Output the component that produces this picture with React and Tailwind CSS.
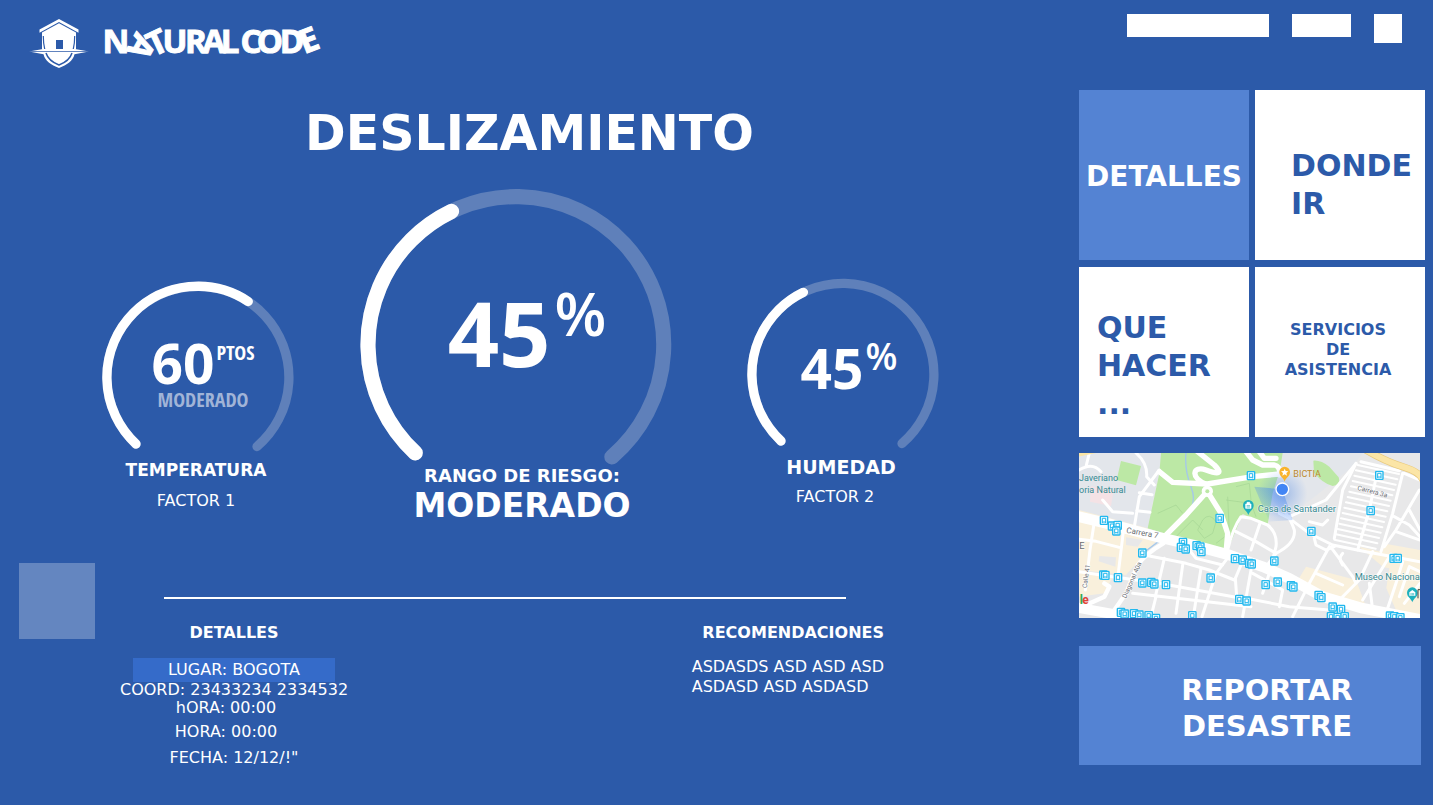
const BRAND_GLYPHS = [
  ["N", 116, 53, 0],
  ["A", 131, 41, 119],
  ["T", 162, 53, -25],
  ["U", 175, 53, 0],
  ["R", 196, 53, 0],
  ["A", 214, 53, 0],
  ["L", 230, 53, 0],
  ["C", 251, 53, 0],
  ["O", 270, 53, 0],
  ["D", 292, 53, 0],
  ["E", 313, 51, -21],
];

function Logo() {
  return (
    <svg viewBox="0 0 60 50" className="h-[50px] w-[60px]" fill="#fff" aria-hidden="true">
      <path d="M30 1 49.500 11.500V14.800L30 4 10.500 14.800V11.500Z" />
      <path d="M30 5.200 47 14.600V31.500H13V14.600Z" />
      <path d="M27 22H34V31.500H27Z" fill="#2c5aa9" />
      <path d="M14.300 18Q14.300 26 15.800 31.500M45.700 18Q45.700 26 44.200 31.500" fill="none" stroke="#2c5aa9" strokeWidth="1.200" />
      <path d="M0 33.500 14 31H46L60 33.500 45.500 36.300C44 43 38 47 30 50 22 47 16 43 14.500 36.300Z" />
      <path d="M0 33.200H60V34H0Z" fill="#2c5aa9" />
      <path d="M17 35C19 41.500 23.500 44.500 30 47 36.500 44.500 41 41.500 43 35" fill="none" stroke="#2c5aa9" strokeWidth="1.500" />
    </svg>
  );
}

function Brand() {
  return (
    <svg viewBox="100 18 240 50" className="h-[50px] w-[240px]" role="img" aria-label="Natural Code">
      <g
        className="font-['Open_Sans',sans-serif] text-[33px] font-bold"
        fill="#fff"
        stroke="#fff"
        strokeWidth="1"
        textAnchor="middle"
      >
        {BRAND_GLYPHS.map(([letter, x, y, angle]) => (
          <text key={letter + x} x={x} y={y} transform={`rotate(${angle} ${x} ${y})`}>
            {letter}
          </text>
        ))}
      </g>
    </svg>
  );
}

const RING_PATH = "M34 163A91 91 0 1 1 155 165.500";

function Ring({ share, children }) {
  return (
    <div className="relative">
      <svg viewBox="0 0 192 171" className="block w-full" fill="none" strokeWidth="9.300" strokeLinecap="round" aria-hidden="true">
        <path d={RING_PATH} stroke="#5f80ba" />
        <path d={RING_PATH} stroke="#fff" pathLength="100" strokeDasharray={`${share} 200`} />
      </svg>
      <div className="absolute inset-0 font-['Open_Sans',sans-serif] leading-none">{children}</div>
    </div>
  );
}

const BUSES = [
  [84, 211], [108, 228], [125, 226], [121, 243], [199, 309], [82, 375], [88, 376], [126, 383], [199, 399],
  [226, 397], [235, 402], [270, 404], [404, 384], [431, 205], [321, 277], [315, 292], [329, 297], [362, 287],
  [373, 291], [376, 305], [477, 326], [500, 330], [520, 340], [527, 342], [490, 448], [512, 453], [135, 487],
  [146, 492], [174, 491], [190, 495], [218, 497], [240, 505], [349, 497], [525, 77], [910, 76], [884, 182],
  [706, 244], [953, 325], [965, 325], [595, 333], [569, 404], [605, 396], [645, 407], [652, 411], [728, 436],
  [736, 443], [770, 471], [795, 478], [765, 500], [785, 502], [806, 500], [942, 498], [955, 500], [973, 503],
];

const STREETS = [
  "M9 268 60 274 130 292M55 215 42 300 28 420M142 245 125 385M9 365 110 380 250 400 480 442",
  "M190 312 330 340 400 360 475 390M265 325 238 440M320 345 300 490M375 355 352 500M458 320 420 370 378 500",
  "M340 300 360 325 440 345M495 345 478 385 482 440M170 430 525 470M240 440 225 500M525 360 500 500",
  "M9 60Q50 35 75 65M40 9 30 50M180 9Q215 40 212 80L235 105M250 60 190 140 175 230M190 128 228 134M182 182 222 187M80 150 110 185 170 190",
  "M455 300Q470 235 495 200L525 205 575 225Q605 250 600 290L580 370 560 430M480 245 540 275 600 310Q660 280 655 240 645 210 630 190",
  "M552 220 525 300M600 310 570 350M610 190 640 205 700 250 770 285 870 305 1032 335M640 200 750 150 840 40",
  "M715 265 720 285 750 300 775 290M700 215 740 225 755 210M760 290 700 400 650 500M765 292 830 380 840 400M890 305 850 390 780 460 760 470",
  "M945 312 900 385 860 450M720 370 800 405M800 310Q785 325 800 345M980 335 960 400 930 490M1032 365 1000 350 970 440M1032 400 985 460",
  "M840 40 800 120 775 265M855 35 970 62M980 70 950 190 915 305M905 60 880 180 845 300M1030 120 960 240 925 290M955 200 1000 225 1032 260M960 245 1032 270M985 70 1032 90M1000 180 1032 240",
  "M510 445 640 470 760 480M530 370 620 420 610 470M880 400 890 480",
];

const BLOCK_ROWS = Array.from({ length: 15 }, (_, i) => {
  const y = 45 + i * 16;
  const x = 845 - i * 5;
  return `M${x} ${y}L${x + 124} ${y + 27}`;
}).join("");

function Pin({ x, y, color }) {
  return (
    <path
      transform={`translate(${x} ${y})`}
      d="M0 27C-3 15-16 12-16-2A16 16 0 0 1 16-2C16 12 3 15 0 27Z"
      fill={color}
    />
  );
}

function CityMap() {
  return (
    <svg
      viewBox="9 9 1023 495"
      preserveAspectRatio="xMidYMid slice"
      className="mt-4 block h-[165px] w-[341px] font-[Roboto,sans-serif]"
      role="img"
      aria-label="Mapa"
    >
      <defs>
        <linearGradient id="beam" x1="1" y1="0" x2="0.200" y2="1">
          <stop offset="0" stopColor="#4285f4" stopOpacity="0.600" />
          <stop offset="1" stopColor="#4285f4" stopOpacity="0" />
        </linearGradient>
        <radialGradient id="halo">
          <stop offset="0.200" stopColor="#3f7de0" stopOpacity="0.750" />
          <stop offset="1" stopColor="#4285f4" stopOpacity="0" />
        </radialGradient>
      </defs>
      <path d="M9 9H1032V504H9Z" fill="#e8e8e9" />
      <path d="M9 9H260L215 235 9 190ZM600 9H860L830 50 640 200 590 150Z" fill="#e3e6eb" />
      <path d="M9 180 215 235 250 262 190 330 150 375 9 360ZM9 360 110 380 85 430 9 440Z" fill="#f9f0dc" />
      <path d="M850 290 945 312 920 350ZM690 350 840 390 870 470 730 435 660 400ZM920 280 1032 300V500L960 480 920 390Z" fill="#f9f0dc" />
      <path d="M70 318 120 322 118 350 68 334ZM150 262 200 270 185 290 150 285ZM890 345 940 355 930 420 880 400Z" fill="#e8e8e9" />
      <path d="M45 108 112 125 105 168 42 155Z" fill="#f4e2e5" />
      <path d="M255 9H620L612 60 590 130 575 225 500 192 455 300 440 305 215 235 250 70Z" fill="#bce8a5" />
      <path d="M135 33 195 48 180 106 122 90ZM712 32Q735 30 760 50L788 82Q795 105 770 108 740 100 714 68Z" fill="#bce8a5" />
      <path d="M330 9Q325 60 345 110T330 200Q290 225 265 262L200 310" fill="none" stroke="#a5c8ea" strokeWidth="4" />
      <path
        d="M245 190 300 165 320 190M380 210Q400 185 420 215L410 250 385 265 365 240ZM450 150 525 160 540 200M455 140 460 250 420 280M480 110 520 100 525 150M300 260 350 210 380 240"
        fill="none"
        stroke="#a5d594"
        strokeWidth="2"
      />
      <g fill="none" stroke="#fff" strokeLinejoin="round" strokeLinecap="round">
        {STREETS.map((d) => (
          <path key={d} d={d} strokeWidth="9" />
        ))}
        <path d={BLOCK_ROWS} strokeWidth="6" />
        <path d="M262 280Q210 310 185 345L150 430 105 495M85 400 100 410 85 440 30 465" strokeWidth="13" />
        <path d="M265 260 330 195 394 124M394 124 435 190 455 250 450 310M250 65 290 97 394 102 530 80 610 72" strokeWidth="16" />
        <path d="M394 104C340 85 350 45 390 60S440 70 415 45L365 5M510 5 530 30 560 45 595 45Q615 50 610 75M550 5 565 25 600 25" strokeWidth="16" />
        <circle cx="394" cy="124" r="12" strokeWidth="10" />
        <path d="M0 198 100 222 250 262 350 285 460 315 560 350 640 385 740 440 860 475 1040 510" strokeWidth="32" />
        <path d="M0 472 110 492 200 515" strokeWidth="30" />
        <path d="M870 0Q930 35 980 50T1040 88" stroke="#e9c97b" strokeWidth="22" />
        <path d="M870 0Q930 35 980 50T1040 88" stroke="#fbe5a6" strokeWidth="18" />
        <path d="M0 14 55 3" stroke="#fbe5a6" strokeWidth="14" />
      </g>
      <circle cx="394" cy="124" r="6" fill="#bce8a5" />
      <circle cx="619" cy="130" r="75" fill="url(#halo)" opacity="0.450" />
      <path d="M619 118 535 110 580 215 650 210Z" fill="url(#beam)" />

      {BUSES.map(([x, y]) => (
        <g key={`${x}-${y}`} transform={`translate(${x} ${y})`}>
          <rect x="-11" y="-12" width="22" height="24" rx="2" fill="#e9f8fe" stroke="#22b8ee" strokeWidth="4" />
          <path d="M-5-6H5V5H-5ZM-5 5V8M5 5V8" fill="#fff" stroke="#22b8ee" strokeWidth="3" />
        </g>
      ))}

      <g fill="#368a92" fontSize="27">
        <text x="9" y="93">Javeriano</text>
        <text x="9" y="129">oria Natural</text>
        <g stroke="#fff" strokeWidth="4" strokeOpacity="0.600" paintOrder="stroke">
          <text x="545" y="187" fontSize="28">Casa de Santander</text>
          <text x="836" y="391" fontSize="28">Museo Naciona</text>
        </g>
        <text x="652" y="81" fill="#bd8a2d">BICTIA</text>
      </g>
      <g fill="#696d72" stroke="#fff" strokeWidth="4" strokeOpacity="0.700" paintOrder="stroke">
        <text x="150" y="248" fontSize="24" transform="rotate(10 150 248)">Carrera 7</text>
        <text x="843" y="119" fontSize="20" transform="rotate(15 843 119)">Carrera 3a</text>
        <text x="32" y="415" fontSize="20" transform="rotate(-82 32 415)">Calle 41</text>
        <text x="150" y="446" fontSize="20" transform="rotate(-66 150 446)">Diagonal 40a</text>
        <text x="10" y="298" fontSize="28">E</text>
      </g>
      <g fontSize="36" fontWeight="700">
        <text x="11" y="462" fill="#34a853">l</text>
        <text x="19" y="462" fill="#e24335">e</text>
      </g>

      <Pin x={517} y={168} color="#1eb0bd" />
      <path d="M509 162H525V175H509ZM513 162V157H521V162" fill="#fff" stroke="#fff" strokeWidth="2" />
      <path d="M512 167H522M512 171H522" stroke="#1eb0bd" strokeWidth="2" />
      <Pin x={1009} y={430} color="#1eb0bd" />
      <path d="M1000 427 1009 420 1018 427V437H1000Z" fill="#fff" />
      <path d="M1005 429V436M1009 429V436M1013 429V436" stroke="#1eb0bd" strokeWidth="2" />
      <path d="M1026 445V419H1034" fill="none" stroke="#444" strokeWidth="3" />
      <Pin x={626} y={68} color="#f9b42d" />
      <path d="m626 56 3 7 8 1-6 5 2 8-7-4-7 4 2-8-6-5 8-1Z" fill="#fff" />
      <circle cx="619" cy="118" r="19" fill="#4285f4" stroke="#fff" strokeWidth="4" />
    </svg>
  );
}

export default function App() {
  return (
    <div className="flex min-h-screen flex-col bg-[#2c5aa9] font-['DejaVu_Sans',Verdana,sans-serif] text-white">
      <header className="flex h-[90px] items-start justify-between pl-[29px] pr-[31px]">
        <a href="#" className="flex gap-[11px] pt-[18px]">
          <Logo />
          <Brand />
        </a>
        <div className="flex items-start gap-[23px] pt-[14px]">
          <div className="h-[23px] w-[142px] bg-white" />
          <div className="h-[23px] w-[59px] bg-white" />
          <div className="h-[29px] w-7 bg-white" />
        </div>
      </header>

      <div className="flex flex-1 items-start">
        <main className="min-w-0 flex-1">
          <h1 className="mt-5 pr-5 text-center text-[49px] font-bold leading-[48px]">DESLIZAMIENTO</h1>

          <section className="mt-[30px] grid grid-cols-[258px_387px_192px] items-start justify-center pr-[38px]">
            <article className="w-[192px] pt-[93px] text-center">
              <Ring share={61.7}>
                <div className="flex flex-col items-center gap-[2px] pl-[10px] pt-[54px]">
                  <div className="flex items-start gap-[2px]">
                    <span className="text-[55px] font-bold">60</span>
                    <span className="mt-1 font-['Open_Sans_Condensed','Open_Sans',sans-serif] text-xl font-bold">PTOS</span>
                  </div>
                  <span className="font-['Open_Sans_Condensed','Open_Sans',sans-serif] text-xl font-bold leading-4 text-[#a1b4d7]">
                    MODERADO
                  </span>
                </div>
              </Ring>
              <div className="pr-1">
                <h2 className="mt-2 text-[17px] font-bold leading-5">TEMPERATURA</h2>
                <p className="mt-[11px] leading-5">FACTOR 1</p>
              </div>
            </article>

            <article className="w-[312px] text-center">
              <Ring share={40.3}>
                <div className="flex items-start justify-center gap-1 pl-[22px] pt-[95px]">
                  <span className="mt-1 text-[90px] font-bold">45</span>
                  <span className="text-[60px] font-semibold">%</span>
                </div>
              </Ring>
              <div className="pl-3 font-bold">
                <h2 className="text-lg leading-5">RANGO DE RIESGO:</h2>
                <p className="text-[33px] leading-10">MODERADO</p>
              </div>
            </article>

            <article className="pt-[90px] text-center">
              <Ring share={40.3}>
                <div className="flex items-start justify-center gap-[2px] pl-3 pt-[59px]">
                  <span className="mt-[3px] text-[55px] font-bold">45</span>
                  <span className="text-[37px] font-semibold">%</span>
                </div>
              </Ring>
              <h2 className="mt-2 pr-1 text-[19px] font-bold leading-5">HUMEDAD</h2>
              <p className="mt-[10px] pr-4 leading-5">FACTOR 2</p>
            </article>
          </section>

          <section className="mt-[37px] flex items-start pl-[19px]">
            <div className="h-[76px] w-[76px] shrink-0 bg-[#6486c0]" />
            <div className="ml-[25px] flex-1">
              <hr className="ml-11 mr-[233px] mt-[34px] h-[2px] border-0 bg-white" />
              <div className="mt-6 flex items-start justify-between pr-[195px]">
                <div className="w-[228px] text-center">
                  <h3 className="font-bold leading-5">DETALLES</h3>
                  <p className="mx-auto mt-[15px] w-[202px] bg-[#356bc9] leading-6">LUGAR: BOGOTA</p>
                  <p className="whitespace-nowrap leading-4">COORD: 23433234 2334532</p>
                  <div className="pr-4 leading-5">
                    <p>hORA: 00:00</p>
                    <p className="mt-1">HORA: 00:00</p>
                  </div>
                  <p className="mt-[6px] leading-5">FECHA: 12/12/!"</p>
                </div>
                <div>
                  <h3 className="text-right font-bold leading-5">RECOMENDACIONES</h3>
                  <p className="mt-[14px] leading-5">
                    ASDASDS ASD ASD ASD
                    <br />
                    ASDASD ASD ASDASD
                  </p>
                </div>
              </div>
            </div>
          </section>
        </main>

        <aside className="mr-2 w-[346px] shrink-0 pb-10">
          <nav className="grid grid-cols-2 gap-x-[6px] gap-y-[7px] font-bold text-[#2c5aa9]">
            <button className="h-[170px] bg-[#5483d3] pt-1 text-[28px] text-white">DETALLES</button>
            <button className="h-[170px] bg-white pl-9 pt-5 text-left text-[30px] leading-[38px]">
              DONDE
              <br />
              IR
            </button>
            <button className="h-[170px] bg-white pl-[18px] pt-7 text-left text-[30px] leading-[38px]">
              QUE
              <br />
              HACER
              <br />
              ...
            </button>
            <button className="h-[170px] bg-white pb-1 pr-1 text-base leading-5">
              SERVICIOS
              <br />
              DE
              <br />
              ASISTENCIA
            </button>
          </nav>
          <CityMap />
          <button className="mt-7 h-[119px] w-[342px] bg-[#5483d3] pl-[34px] pt-1 text-[29px] font-bold leading-9">
            REPORTAR
            <br />
            DESASTRE
          </button>
        </aside>
      </div>
    </div>
  );
}
